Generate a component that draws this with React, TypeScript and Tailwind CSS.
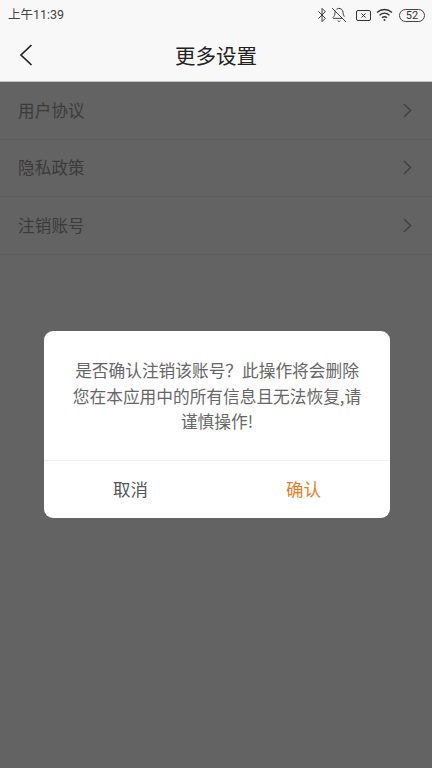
import { Bluetooth, BellOff } from 'lucide-react';

const rows = ['用户协议', '隐私政策', '注销账号'];

const StatusBar = () => (
  <div className="flex items-center justify-between h-[30px] pl-2 pr-[7px] text-[12.500px] text-[#444]">
    <span>上午11:39</span>
    <div className="flex items-center text-[#333]">
      <Bluetooth size={16} strokeWidth={1.4} />
      <BellOff size={16} strokeWidth={1.4} className="ml-[1px]" />
      <svg width="15" height="12" viewBox="0 0 15 12" fill="none" stroke="currentColor" strokeWidth="1" className="ml-[9px]">
        <rect x="0.5" y="1.5" width="14" height="10" rx="1.5" />
        <path d="M5.5 4.5l4 4M9.5 4.5l-4 4" />
      </svg>
      <svg width="17" height="14" viewBox="0 0 17 14" fill="none" stroke="currentColor" strokeWidth="1.3" className="ml-[5px]">
        <path d="M1 4.5c4.4-4 10.6-4 15 0" />
        <path d="M3.5 7.2c3-2.7 7-2.7 10 0" />
        <path d="M6 9.8c1.500-1.300 3.500-1.300 5 0" />
        <circle cx="8.500" cy="12" r="1" fill="currentColor" stroke="none" />
      </svg>
      <div className="ml-[6px] flex h-[13px] w-[26px] items-center justify-center rounded-[6.500px] border border-[#444] text-[11px] leading-none">
        52
      </div>
    </div>
  </div>
);

const App = () => {
  return (
    <div className="relative flex h-[768px] w-[432px] flex-col overflow-hidden bg-white font-['Roboto','Noto_Sans_CJK_SC',sans-serif]">
      <div className="bg-[#f8f8f8] border-b border-[#c4c4c4]">
        <StatusBar />
        <div className="relative flex h-[51px] items-center justify-center">
          <svg width="14" height="22" viewBox="0 0 14 22" fill="none" stroke="#222" strokeWidth="1.7" className="absolute left-[19px] top-[14px]">
            <path d="M12.500 1L2 11l10.500 10" />
          </svg>
          <span className="text-[20.500px] text-[#222] font-['Noto_Sans_CJK_SC',sans-serif]">更多设置</span>
        </div>
      </div>

      <div className="relative flex-1">
        {rows.map(label => (
          <div key={label} className="flex h-[57.500px] items-center justify-between border-b border-[#f0f0f0] pl-[18px] pr-[20px]">
            <span className="text-[16.500px] tracking-[0.2px] text-[#999] font-['Noto_Sans_CJK_SC',sans-serif]">{label}</span>
            <svg width="9" height="15" viewBox="0 0 9 15" fill="none" stroke="#aaa" strokeWidth="1.7">
              <path d="M1 1l6.500 6.500L1 14" />
            </svg>
          </div>
        ))}

        <div className="absolute inset-0 bg-black/[0.61]" />
      </div>

      <div className="absolute left-[44px] top-[331px] w-[346px] rounded-[9px] bg-white font-['Noto_Sans_CJK_SC',sans-serif]">
        <div className="h-[130px] border-b border-[#f0f0f0] px-[28px] pt-[27px] text-center text-[16.700px] leading-[25.500px] text-[#666]">
          是否确认注销该账号？此操作将会删除您在本应用中的所有信息且无法恢复,请谨慎操作!
        </div>
        <div className="grid h-[57px] grid-cols-2 items-center text-center text-[17.500px]">
          <span className="text-[#555]">取消</span>
          <span className="text-[#e87d24]">确认</span>
        </div>
      </div>
    </div>
  );
};

export default App;
